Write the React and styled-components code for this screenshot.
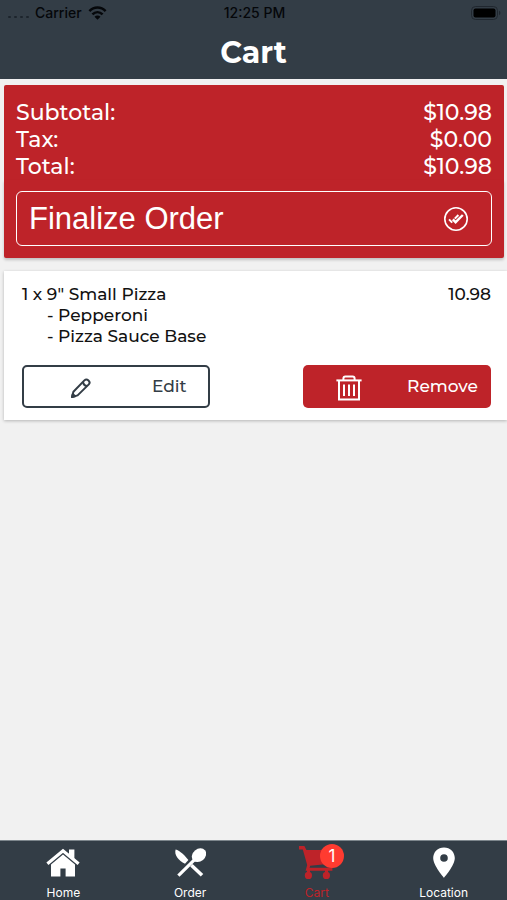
import React from 'react'
import styled, { createGlobalStyle } from 'styled-components'

const RED = '#be2329'
const SLATE = '#333d46'

const order = {
    subtotal: '10.98',
    tax: '0.00',
    total: '10.98'
}

const items = [
    {
        id: 1,
        quantity: 1,
        name: '9" Small Pizza',
        price: '10.98',
        toppings: ['Pepperoni', 'Pizza Sauce Base']
    }
]

const WifiIcon = () => (
    <svg width="19" height="14" viewBox="0 0 18 14" fill="none" stroke="#05070a" strokeWidth="2.5">
        <path d="M0.9 5.2 C5.5 0.3 12.5 0.3 17.1 5.2" />
        <path d="M3.9 8.4 C6.9 5.4 11.1 5.4 14.1 8.4" />
        <path d="M9 13.8 L6 10.8 C7.8 9.2 10.2 9.2 12 10.8 Z" fill="#05070a" stroke="none" />
    </svg>
)

const BatteryIcon = () => (
    <svg width="30" height="14" viewBox="0 0 30 14">
        <rect x="0.5" y="0.5" width="26" height="13" rx="4" fill="none" stroke="#20272f" />
        <rect x="2.5" y="2.5" width="22" height="9" rx="2" fill="#000" />
        <path d="M28 4.8 a2.4 2.4 0 0 1 0 4.4 Z" fill="#20272f" />
    </svg>
)

const DoneIcon = () => (
    <svg width="24" height="24" viewBox="0 0 24 24" fill="none" stroke="#fff">
        <circle cx="12" cy="12" r="11.2" strokeWidth="1.6" />
        <path d="M5 12.4 L8.2 15.6" strokeWidth="2" />
        <path d="M8.8 12.4 L11.6 15.2 L18.8 8" strokeWidth="2.4" />
        <path d="M10.8 11.6 L14.4 8" strokeWidth="2" />
    </svg>
)

const PencilIcon = () => (
    <svg width="20" height="20" viewBox="0 0 20 20" fill="none" stroke={SLATE} strokeWidth="2" strokeLinejoin="round">
        <path d="M1 19 L2.4 13.8 L13.4 2.4 C16 -0.2 20.2 3.8 17.8 6.4 L6.6 17.4 Z" />
        <path d="M12 4 C12.4 6.4 13.8 7.8 16.2 8" />
        <path d="M1 19 L1.8 16 L4 18.2 Z" fill={SLATE} />
    </svg>
)

const TrashIcon = () => (
    <svg width="26" height="26" viewBox="0 0 26 26" fill="none" stroke="#fff" strokeWidth="2">
        <path d="M0.4 5.4 H25.6" />
        <path d="M7.4 5 V3.4 Q7.4 1.4 9.4 1.4 H16.6 Q18.6 1.4 18.6 3.4 V5" />
        <path d="M3 5.4 V24.6 H23 V5.4" />
        <path d="M8 9.6 V21 M13 9.6 V21 M18 9.6 V21" />
    </svg>
)

const HomeIcon = () => (
    <svg width="34" height="32" viewBox="0 0 34 32" fill="#fff">
        <path d="M23 2.4 H28.4 V12 L23 7.4 Z" />
        <path d="M1.4 16.8 L17 3.8 L32.6 16.8" fill="none" stroke="#fff" strokeWidth="3.2" />
        <path d="M5 17.6 L17 7.6 L29 17.6 V29.4 H19.6 V21.6 H14.4 V29.4 H5 Z" />
    </svg>
)

const OrderIcon = () => (
    <svg width="32" height="32" viewBox="0 0 32 32" fill="#fff">
        <path d="M1.6 2.4 C6 3.4 11 8.6 14.4 13 L11 16.8 C4.4 13.4 0 8 1.6 2.4 Z" />
        <path d="M17.4 18.2 L28 28.2" stroke="#fff" strokeWidth="3.6" />
        <path d="M4.4 28.6 L20.6 12.6" stroke="#fff" strokeWidth="3.2" />
        <ellipse cx="25" cy="8.2" rx="7.8" ry="6.2" transform="rotate(-40 25 8.2)" />
    </svg>
)

const CartIcon = () => (
    <svg width="36" height="36" viewBox="0 0 36 36" fill={RED}>
        <path d="M0 1 H5.4 L7.4 5 H33.6 V18.4 L11.2 20.8 L10.6 22.8 H33.4 V25.8 H6.6 L8.2 20 L3.8 4.4 H0 Z" />
        <circle cx="9.4" cy="30.4" r="3.6" />
        <circle cx="27.4" cy="30.4" r="3.6" />
        <path d="M8 25 H11 V30 H8 Z M26 25 H29 V30 H26 Z" />
    </svg>
)

const PinIcon = () => (
    <svg width="24" height="32" viewBox="0 0 24 32">
        <path
            fill="#fff"
            fillRule="evenodd"
            d="M12 0.4 C5.8 0.4 1.2 5 1.2 11 C1.2 18.6 12 30.8 12 30.8 C12 30.8 22.8 18.6 22.8 11 C22.8 5 18.2 0.4 12 0.4 Z M12 7.2 A3.8 3.8 0 1 1 12 14.8 A3.8 3.8 0 1 1 12 7.2 Z"
        />
    </svg>
)

const tabs = [
    { name: 'Home', icon: <HomeIcon /> },
    { name: 'Order', icon: <OrderIcon /> },
    { name: 'Cart', icon: <CartIcon />, active: true, badge: 1 },
    { name: 'Location', icon: <PinIcon /> }
]

const CartItem = ({ item }) => {
    return (
        <ItemCard>
            <ItemTop>
                <ItemName>{item.quantity} x {item.name}</ItemName>
                <span>{item.price}</span>
            </ItemTop>
            <Toppings>
                {item.toppings.map((topping) => (
                    <li key={topping}>- {topping}</li>
                ))}
            </Toppings>
            <ItemActions>
                <EditButton type="button">
                    <ActionIcon><PencilIcon /></ActionIcon>
                    Edit
                </EditButton>
                <RemoveButton type="button">
                    <ActionIcon><TrashIcon /></ActionIcon>
                    Remove
                </RemoveButton>
            </ItemActions>
        </ItemCard>
    )
}

const App = () => {
    return (
        <Screen>
            <GlobalStyle />
            <Header>
                <StatusBar>
                    <Carrier>
                        <Signal><i /><i /><i /><i /></Signal>
                        Carrier
                        <WifiIcon />
                    </Carrier>
                    <span>12:25 PM</span>
                    <Battery><BatteryIcon /></Battery>
                </StatusBar>
                <Title>Cart</Title>
            </Header>

            <Content>
                <Summary>
                    <SummaryRow><dt>Subtotal:</dt><dd>${order.subtotal}</dd></SummaryRow>
                    <SummaryRow><dt>Tax:</dt><dd>${order.tax}</dd></SummaryRow>
                    <SummaryRow><dt>Total:</dt><dd>${order.total}</dd></SummaryRow>
                </Summary>
                <FinalizeArea>
                    <FinalizeButton type="button">
                        Finalize Order
                        <DoneIcon />
                    </FinalizeButton>
                </FinalizeArea>
                {items.map((item) => (
                    <CartItem key={item.id} item={item} />
                ))}
            </Content>

            <TabBar>
                {tabs.map((tab) => (
                    <Tab key={tab.name} href={'#' + tab.name.toLowerCase()} $active={tab.active}>
                        <TabIcon>
                            {tab.icon}
                            {tab.badge && <Badge>{tab.badge}</Badge>}
                        </TabIcon>
                        {tab.name}
                    </Tab>
                ))}
            </TabBar>
        </Screen>
    )
}

export default App

const GlobalStyle = createGlobalStyle`
* {
    box-sizing: border-box;
}
body {
    margin: 0;
    background-color: #f1f1f1;
    font-family: Montserrat, Inter, sans-serif;
    font-weight: 500;
    color: #111;
}
svg {
    display: block;
    flex-shrink: 0;
}
button {
    font-family: inherit;
    cursor: pointer;
}
`
const Screen = styled.div`
display: flex;
flex-direction: column;
min-height: 100vh;
`
const Header = styled.header`
background-color: ${SLATE};
`
const StatusBar = styled.div`
display: grid;
grid-template-columns: 1fr auto 1fr;
align-items: center;
height: 26px;
padding: 0 6px 0 8px;
font: 500 14px/26px Inter, sans-serif;
color: #05070a;
`
const Carrier = styled.div`
display: flex;
align-items: center;
gap: 6px;
`
const Signal = styled.div`
display: flex;
gap: 3px;
padding-top: 8px;
i {
    width: 3px;
    height: 2px;
    border-radius: 1px;
    background-color: #1d242c;
}
`
const Battery = styled.div`
justify-self: end;
`
const Title = styled.h1`
margin: 0;
height: 53px;
font-size: 30px;
line-height: 53px;
font-weight: 700;
text-align: center;
color: #fff;
`
const Content = styled.main`
flex-grow: 1;
padding: 6px 0 12px 4px;
`
const Summary = styled.dl`
margin: 0 3px 0 0;
padding: 14px 12px 0;
border-radius: 2px 2px 0 0;
background-color: ${RED};
color: #fff;
`
const SummaryRow = styled.div`
display: flex;
justify-content: space-between;
font-size: 22px;
line-height: 27px;
dd {
    margin: 0;
}
`
const FinalizeArea = styled.div`
margin: 0 3px 13px 0;
padding: 11px 12px 12px;
border-radius: 0 0 2px 2px;
background-color: ${RED};
box-shadow: 0 2px 3px rgba(0,0,0,.2);
`
const FinalizeButton = styled.button`
display: flex;
align-items: center;
justify-content: space-between;
width: 100%;
height: 55px;
padding: 0 23px 0 12px;
border: 1px solid #fff;
border-radius: 6px;
background-color: transparent;
font: 400 31px "Liberation Sans", sans-serif;
color: #fff;
`
const ItemCard = styled.article`
padding: 13px 16px 12px 18px;
background-color: #fff;
box-shadow: 0 1px 3px rgba(0,0,0,.25);
font-size: 17px;
line-height: 21px;
`
const ItemTop = styled.div`
display: flex;
justify-content: space-between;
`
const ItemName = styled.h2`
margin: 0;
font-size: 17px;
font-weight: 500;
`
const Toppings = styled.ul`
margin: 0;
padding: 0 0 0 25px;
list-style: none;
`
const ItemActions = styled.div`
display: flex;
justify-content: space-between;
margin-top: 18px;
`
const ActionButton = styled.button`
display: flex;
align-items: center;
width: 40%;
height: 43px;
border-radius: 5px;
font-size: 17px;
font-weight: 500;
`
const EditButton = styled(ActionButton)`
padding: 0 21px 1px 0;
border: 2px solid ${SLATE};
background-color: #fff;
color: ${SLATE};
`
const RemoveButton = styled(ActionButton)`
padding: 0 13px 1px 0;
border: 0;
background-color: ${RED};
color: #fff;
`
const ActionIcon = styled.span`
display: flex;
flex-grow: 1;
justify-content: center;
padding: 4px 13px 0 0;
`
const TabBar = styled.nav`
position: sticky;
bottom: 0;
display: grid;
grid-template-columns: repeat(4, 1fr);
height: 60px;
border-top: 1px solid #7d868c;
background-color: ${SLATE};
`
const Tab = styled.a`
display: flex;
flex-direction: column;
align-items: center;
padding-top: 5px;
font: 400 12px/14px Inter, sans-serif;
text-decoration: none;
color: ${(props) => (props.$active ? RED : '#fff')};
`
const TabIcon = styled.span`
position: relative;
display: flex;
align-items: center;
justify-content: center;
height: 34px;
margin-bottom: 6px;
`
const Badge = styled.span`
position: absolute;
top: -2px;
left: 21px;
width: 24px;
height: 24px;
border-radius: 50%;
background-color: #ff3b30;
font-size: 17px;
line-height: 24px;
text-align: center;
color: #fff;
`
